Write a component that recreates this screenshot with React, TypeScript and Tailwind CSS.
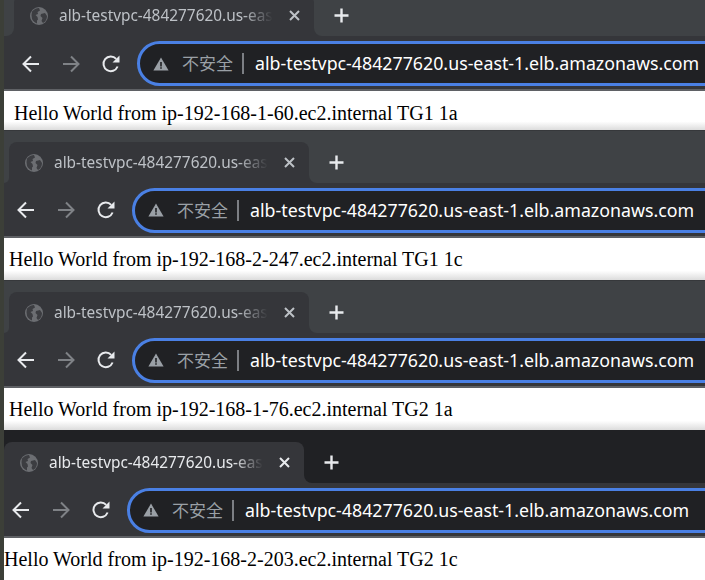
const ui = '"Noto Sans", "Noto Sans CJK SC", sans-serif';

function Globe() {
  return (
    <svg width="18" height="18" viewBox="0 0 18 18" className="shrink-0">
      <circle cx="9" cy="9" r="9" fill="#6c6e72" />
      <path d="M2 4.5 C4 2 7 1 9 1 L10 3.5 L7.5 5 L8 7 L5.5 8 L7.5 10 L8 12.5 L7 13.5 L7 16.5 C5 16 3 14 2 12 L1.5 8 Z" fill="#3c3d41" />
      <path d="M11 7 L15 6 L17 9 C17 12 15.5 15 13 16 L11.5 14 L12.5 11 L10.5 9 Z" fill="#3c3d41" />
    </svg>
  );
}

function Back() {
  return (
    <svg width="20" height="20" viewBox="0 0 20 20" fill="none" stroke="currentColor" strokeWidth="2" className="shrink-0">
      <path d="M18 10H3M10 2.5 2.5 10l7.5 7.5" />
    </svg>
  );
}

function Forward() {
  return (
    <svg width="20" height="20" viewBox="0 0 20 20" fill="none" stroke="currentColor" strokeWidth="2" className="shrink-0">
      <path d="M2 10h15M10 2.5 17.5 10 10 17.5" />
    </svg>
  );
}

function Reload() {
  return (
    <svg width="20" height="20" viewBox="0 0 20 20" fill="none" className="shrink-0">
      <path d="M16.6 12.5A7.3 7.3 0 1 1 15.2 4.9" stroke="currentColor" strokeWidth="2" />
      <path d="M11.5 8.5h7v-7z" fill="currentColor" />
    </svg>
  );
}

function Warn() {
  return (
    <svg width="16" height="14" viewBox="0 0 16 14" className="shrink-0">
      <path d="M8 0.5 15.6 13.6H0.4Z" fill="#9aa0a6" />
      <path d="M7.2 5h1.6v4.4H7.2zM7.2 10.2h1.6v1.6H7.2z" fill="#202124" />
    </svg>
  );
}

type BlockProps = {
  shift: string;
  rowPad: string;
  url: string;
  text: string;
  strip: string;
  tabText: string;
  tabTop: string;
  rowH: string;
  tabMargin: string;
  plusPad: string;
  padText: string;
  pageH: string;
  fade: string;
  topLine: string;
};

function Block({ shift, rowPad, url, text, strip, tabText, tabTop, rowH, tabMargin, plusPad, padText, pageH, fade, topLine }: BlockProps) {
  return (
    <section className="flex flex-col">
      <div className={`${tabTop} ${strip} ${topLine} shrink-0`} />
      <div className={`flex ${rowH} ${strip} shrink-0 overflow-hidden`}>
        <div className="bg-[#35363a] shrink-0">
          <div className={`${shift} ${strip} h-full rounded-br-lg`} />
        </div>
        <div className="w-[300px] shrink-0">
          <div className={`${tabMargin} h-[41px] rounded-t-lg bg-[#35363a] flex items-center pl-[16px]`}>
            <Globe />
            <span
              className={`ml-[11px] w-[214px] shrink-0 overflow-hidden whitespace-nowrap text-[15.4px] ${tabText} [mask-image:linear-gradient(to_right,black_86%,transparent)]`}
              style={{ fontFamily: ui }}
            >
              {url}
            </span>
            <svg width="11" height="11" viewBox="0 0 11 11" className={`ml-[16px] shrink-0 ${tabText}`} fill="none" stroke="currentColor" strokeWidth="2">
              <path d="M1 1l9 9M10 1l-9 9" />
            </svg>
          </div>
        </div>
        <div className="bg-[#35363a] flex-1">
          <div className={`h-full ${strip} rounded-bl-lg flex items-center pl-[20px] ${plusPad}`}>
            <svg width="15" height="15" viewBox="0 0 15 15" className="text-[#e8eaed]" fill="none" stroke="currentColor" strokeWidth="2.4">
              <path d="M7.5 0.5v14M0.5 7.5h14" />
            </svg>
          </div>
        </div>
      </div>
      <div className={`h-[53px] bg-[#35363a] shrink-0 flex items-center ${rowPad} overflow-hidden`}>
        <div className="flex items-center gap-5 text-[#e8eaed]">
          <Back />
          <span className="text-[#7f8286]"><Forward /></span>
          <Reload />
        </div>
        <div className="ml-[16px] h-[45px] w-[620px] shrink-0 rounded-full border-[3px] border-[#4a80e4] bg-[#202124] flex items-center pl-[13px]">
          <Warn />
          <span className="ml-[13px] text-[17px] text-[#9aa0a6] leading-none" style={{ fontFamily: ui }}>不安全</span>
          <span className="ml-[9px] h-[21px] w-[2px] bg-[#7c7f84]" />
          <span className="ml-[11px] text-[17.8px] text-white whitespace-nowrap" style={{ fontFamily: ui }}>{url}</span>
        </div>
      </div>
      <div className="h-[2px] bg-[#5f6165] shrink-0" />
      <div className={`${pageH} ${fade} shrink-0 ${padText}`}>
        <p className="text-[20px] leading-[22px] text-black whitespace-pre" style={{ fontFamily: '"Liberation Serif", serif' }}>{text}</p>
      </div>
    </section>
  );
}

export default function App() {
  const url = "alb-testvpc-484277620.us-east-1.elb.amazonaws.com";
  const light = "bg-[#3f4245]";
  const page = "bg-[linear-gradient(to_bottom,white_78%,#dcdcdc)]";
  return (
    <div className="w-[705px] h-[580px] overflow-hidden flex bg-[#3f4245]">
      <div className="w-1 shrink-0 bg-[#3c3f38]" />
      <div className="flex-1 min-w-0 flex flex-col overflow-hidden">
        <Block shift="w-[10px]" rowPad="pl-[17px] pt-[2px]" url={url} text="Hello World from ip-192-168-1-60.ec2.internal TG1 1a" strip={light} tabText="text-[#bdc1c6]" tabTop="h-0" rowH="h-[36px]" tabMargin="-mt-[5px]" plusPad="pb-[5px]" padText="pl-[10px] pt-[11px]" pageH="h-[39px]" fade={page} topLine="" />
        <Block shift="w-[5px]" rowPad="pl-[12px] pt-[1px]" url={url} text="Hello World from ip-192-168-2-247.ec2.internal TG1 1c" strip={light} tabText="text-[#bdc1c6]" tabTop="h-[12px]" rowH="h-[41px]" tabMargin="mt-0" plusPad="" padText="pl-[5px] pt-[10px]" pageH="h-[42px]" fade={page} topLine="border-t border-[#36383b]" />
        <Block shift="w-[5px]" rowPad="pl-[12px] pt-[1px]" url={url} text="Hello World from ip-192-168-1-76.ec2.internal TG2 1a" strip={light} tabText="text-[#bdc1c6]" tabTop="h-[12px]" rowH="h-[41px]" tabMargin="mt-0" plusPad="" padText="pl-[5px] pt-[10px]" pageH="h-[42px]" fade={page} topLine="border-t border-[#36383b]" />
        <Block shift="w-0" rowPad="pl-[7px] pt-[1px]" url={url} text="Hello World from ip-192-168-2-203.ec2.internal TG2 1c" strip="bg-[#202124]" tabText="text-[#e8eaed]" tabTop="h-[12px]" rowH="h-[41px]" tabMargin="mt-0" plusPad="" padText="pl-0 pt-[10px]" pageH="h-[42px]" fade="bg-white" topLine="" />
      </div>
    </div>
  );
}
